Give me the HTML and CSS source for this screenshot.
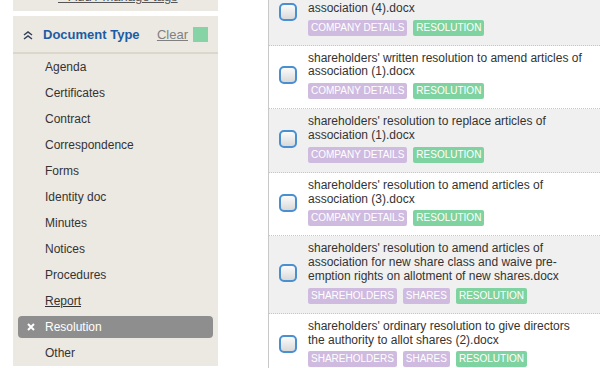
FILE: index.html
```html
<!DOCTYPE html>
<html lang="en">
<head>
<meta charset="utf-8">
<title>Documents</title>
<link rel="stylesheet" href="styles.css">
</head>
<body>
<div class="page">
  <aside class="sidebar">
    <div class="tagbox"><a class="tag-link" href="#">+ Add / manage tags</a></div>
    <section class="facet">
      <div class="facet-head">
        <svg class="chev" width="10" height="9" viewBox="0 0 10 9" aria-hidden="true">
          <polyline points="1,4 5,1 9,4" fill="none" stroke="#34405a" stroke-width="1.5"/>
          <polyline points="1,8 5,5 9,8" fill="none" stroke="#34405a" stroke-width="1.5"/>
        </svg>
        <span class="facet-title">Document Type</span>
        <a class="clear" href="#">Clear</a>
        <span class="swatch"></span>
      </div>
      <ul class="facet-list">
        <li>Agenda</li>
        <li>Certificates</li>
        <li>Contract</li>
        <li>Correspondence</li>
        <li>Forms</li>
        <li>Identity doc</li>
        <li>Minutes</li>
        <li>Notices</li>
        <li>Procedures</li>
        <li class="hover">Report</li>
        <li class="active"><span class="x"><svg width="8" height="8" viewBox="0 0 8 8" aria-hidden="true"><path d="M1 1 L7 7 M7 1 L1 7" stroke="#fff" stroke-width="2"/></svg></span>Resolution</li>
        <li>Other</li>
      </ul>
    </section>
  </aside>
  <main class="results">
    <div class="row alt">
      <span class="check"></span>
      <div class="info">
        <div class="name">shareholders' resolution to amend articles of association (4).docx</div>
        <div class="tags"><span class="tag purple">Company Details</span><span class="tag green">Resolution</span></div>
      </div>
    </div>
    <div class="row">
      <span class="check"></span>
      <div class="info">
        <div class="name">shareholders' written resolution to amend articles of association (1).docx</div>
        <div class="tags"><span class="tag purple">Company Details</span><span class="tag green">Resolution</span></div>
      </div>
    </div>
    <div class="row alt">
      <span class="check"></span>
      <div class="info">
        <div class="name">shareholders' resolution to replace articles of association (1).docx</div>
        <div class="tags"><span class="tag purple">Company Details</span><span class="tag green">Resolution</span></div>
      </div>
    </div>
    <div class="row">
      <span class="check"></span>
      <div class="info">
        <div class="name">shareholders' resolution to amend articles of association (3).docx</div>
        <div class="tags"><span class="tag purple">Company Details</span><span class="tag green">Resolution</span></div>
      </div>
    </div>
    <div class="row alt">
      <span class="check"></span>
      <div class="info">
        <div class="name">shareholders' resolution to amend articles of association for new share class and waive pre-emption rights on allotment of new shares.docx</div>
        <div class="tags"><span class="tag purple">Shareholders</span><span class="tag purple">Shares</span><span class="tag green">Resolution</span></div>
      </div>
    </div>
    <div class="row">
      <span class="check"></span>
      <div class="info">
        <div class="name">shareholders' ordinary resolution to give directors the authority to allot shares (2).docx</div>
        <div class="tags"><span class="tag purple">Shareholders</span><span class="tag purple">Shares</span><span class="tag green">Resolution</span></div>
      </div>
    </div>
  </main>
</div>
</body>
</html>
```
FILE: styles.css
```css
* { box-sizing: border-box; }
html, body {
  margin: 0;
  padding: 0;
  background: #fff;
  font-family: "Liberation Sans", Arial, sans-serif;
  color: #333;
}
body { height: 368px; overflow: hidden; }
.page {
  display: flex;
  align-items: flex-start;
  height: 368px;
  overflow: hidden;
}
.sidebar {
  width: 205px;
  margin-left: 13px;
  flex: none;
}
.tagbox {
  background: #ece9e3;
  height: 26px;
  margin-top: -15px;
  padding: 4px 0 0 45px;
  font-size: 13px;
  line-height: 15px;
}
.tag-link { color: #555; text-decoration: underline; }
.facet {
  margin-top: 5px;
  background: #ece9e3;
}
.facet-head {
  height: 38px;
  display: flex;
  align-items: center;
  padding: 0 10px;
  border-bottom: 2px solid #dbd7cc;
}
.chev { display: block; flex: none; margin-top: 2px; }
.facet-title {
  margin-left: 10px;
  font-size: 13px;
  font-weight: bold;
  color: #1b5ca4;
}
.clear {
  margin-left: auto;
  font-size: 13px;
  color: #808080;
  text-decoration: underline;
}
.swatch {
  width: 15px;
  height: 15px;
  background: #86d4a6;
  margin-left: 5px;
}
.facet-list {
  list-style: none;
  margin: 0;
  padding: 0;
  font-size: 12px;
}
.facet-list li {
  height: 26px;
  display: flex;
  align-items: center;
  padding-left: 32px;
  color: #333;
}
.facet-list li.hover { text-decoration: underline; }
.facet-list li.active {
  height: 22px;
  margin: 2px 5px;
  padding-left: 9px;
  background: #8e8e8e;
  border-radius: 4px;
  color: #fff;
}
.x {
  width: 18px;
  display: flex;
  align-items: center;
}
.x svg { display: block; }
.results {
  flex: 1;
  margin-left: 50px;
  margin-top: -18px;
  border-left: 1px solid #c9c9c9;
  min-height: 400px;
}
.row {
  display: flex;
  align-items: center;
  padding: 6px 0 9px 10px;
  border-bottom: 1px dotted #c6c6c6;
  background: #fff;
}
.row.alt { background: #f0f0f0; }
.check {
  flex: none;
  width: 18px;
  height: 18px;
  border: 2px solid #4a8fcf;
  border-radius: 5px;
  background: linear-gradient(#fbfbfb, #d9d9d9);
  margin-right: 11px;
}
.info { width: 278px; }
.name {
  font-size: 12px;
  line-height: 13.8px;
  color: #333;
}
.tags {
  display: flex;
  gap: 6px;
  margin-top: 4px;
}
.tag {
  height: 16px;
  line-height: 16px;
  padding: 0 3px;
  font-size: 10px;
  text-transform: uppercase;
  color: #fff;
  border-radius: 2px;
}
.purple { background: #d0bbe0; }
.green { background: #7fd3a0; }
```
